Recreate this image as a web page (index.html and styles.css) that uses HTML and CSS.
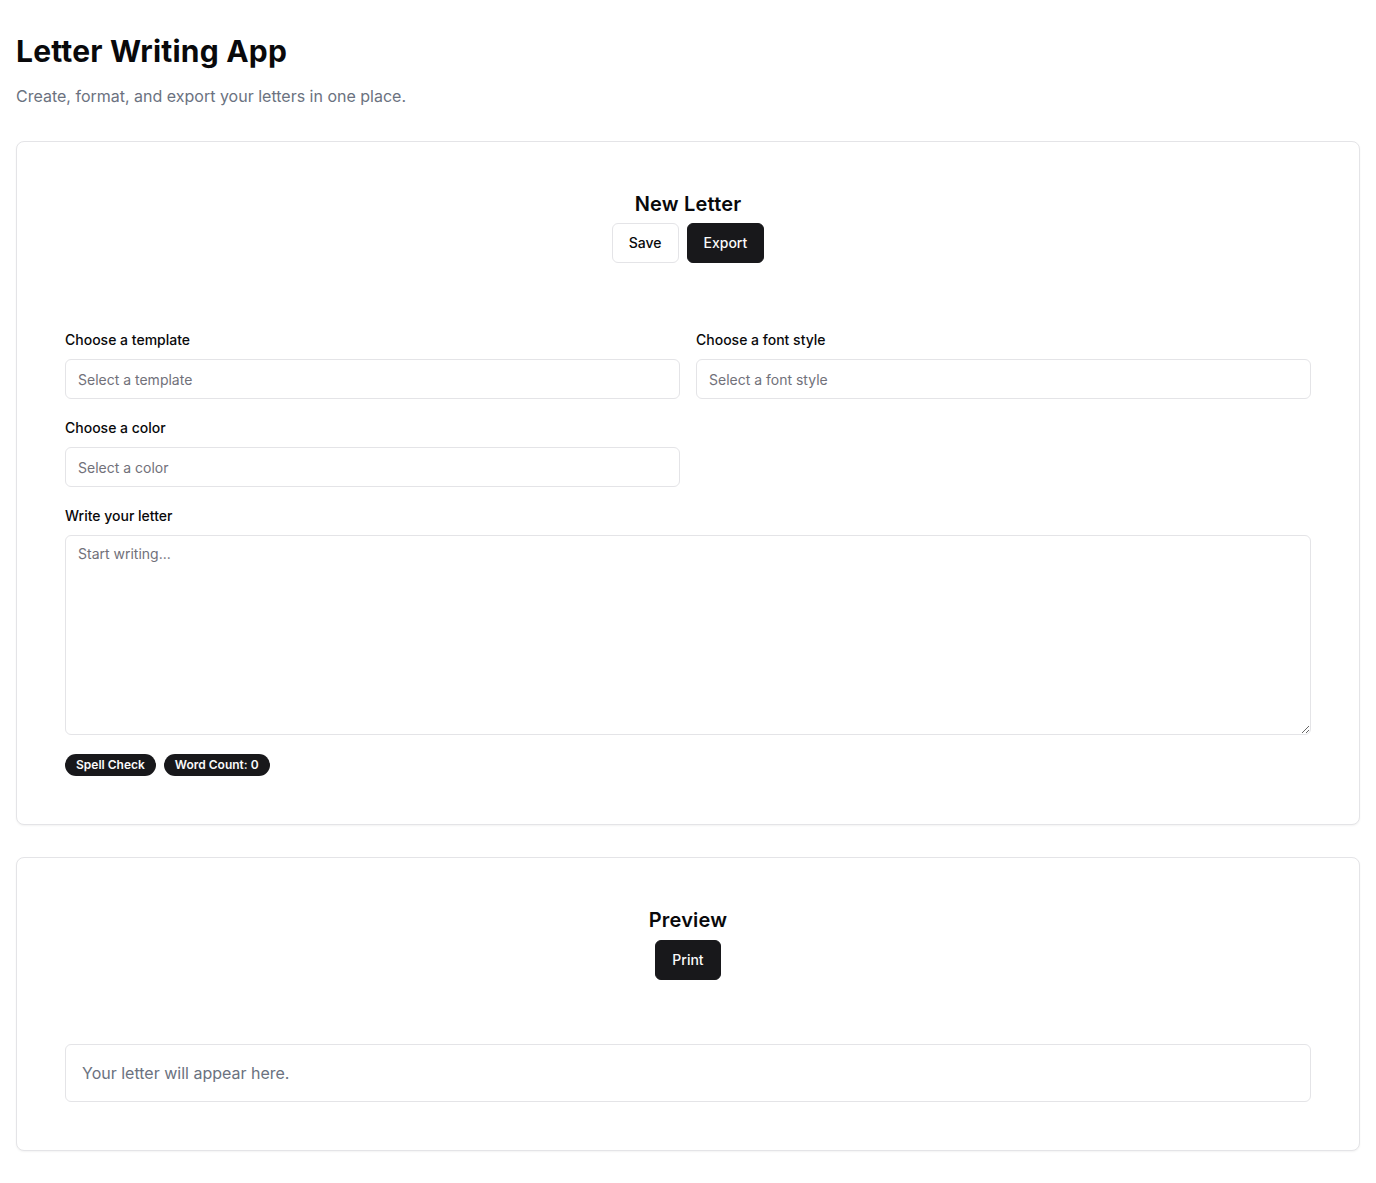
FILE: index.html
```html
<!DOCTYPE html>
<html lang="en">
<head>
<meta charset="utf-8">
<title>Letter Writing App</title>
<link rel="stylesheet" href="styles.css">
</head>
<body>
<main class="page">
  <h1 class="page-title">Letter Writing App</h1>
  <p class="page-subtitle">Create, format, and export your letters in one place.</p>

  <section class="card">
    <div class="card-header">
      <h2 class="card-title">New Letter</h2>
      <div class="actions">
        <button class="btn btn-outline" type="button">Save</button>
        <button class="btn btn-primary" type="button">Export</button>
      </div>
    </div>
    <div class="card-content">
      <div class="form-grid">
        <div class="field">
          <label class="label">Choose a template</label>
          <div class="select"><span class="placeholder">Select a template</span></div>
        </div>
        <div class="field">
          <label class="label">Choose a font style</label>
          <div class="select"><span class="placeholder">Select a font style</span></div>
        </div>
        <div class="field">
          <label class="label">Choose a color</label>
          <div class="select"><span class="placeholder">Select a color</span></div>
        </div>
      </div>
      <div class="field field-full">
        <label class="label">Write your letter</label>
        <textarea class="textarea" placeholder="Start writing..."></textarea>
      </div>
      <div class="badges">
        <span class="badge">Spell Check</span>
        <span class="badge">Word Count: 0</span>
      </div>
    </div>
  </section>

  <section class="card card-preview">
    <div class="card-header card-header-preview">
      <h2 class="card-title">Preview</h2>
      <div class="actions">
        <button class="btn btn-primary" type="button">Print</button>
      </div>
    </div>
    <div class="card-content">
      <div class="preview-box">Your letter will appear here.</div>
    </div>
  </section>
</main>
</body>
</html>
```

FILE: styles.css
```css
* {
  box-sizing: border-box;
}

html, body {
  margin: 0;
  padding: 0;
  background: #ffffff;
}

body {
  font-family: Inter, "Noto Sans", "Liberation Sans", sans-serif;
  color: #09090b;
  font-size: 16px;
  line-height: 24px;
}

.page {
  padding: 33px 16px 32px;
}

.page-title {
  margin: 0;
  font-size: 30px;
  line-height: 36px;
  font-weight: 700;
  letter-spacing: 0.2px;
}

.page-subtitle {
  margin: 15px 0 0;
  font-size: 16px;
  line-height: 24px;
  color: #6b7280;
}

.card {
  margin-top: 33px;
  border: 1px solid #e4e4e7;
  border-radius: 8px;
  background: #fff;
  box-shadow: 0 1px 2px rgba(0, 0, 0, 0.05);
}

.card-preview {
  margin-top: 32px;
}

.card-header {
  padding: 48px 48px 48px;
  display: flex;
  flex-direction: column;
  align-items: center;
  gap: 5px;
}

.card-header-preview {
  gap: 6px;
}

.card-title {
  margin: 0;
  font-size: 20px;
  line-height: 28px;
  font-weight: 600;
  letter-spacing: 0.2px;
}

.actions {
  display: flex;
  gap: 8px;
}

.btn {
  height: 40px;
  padding: 0 16px;
  border-radius: 6px;
  font-family: inherit;
  font-size: 14px;
  font-weight: 500;
  line-height: 20px;
  cursor: pointer;
}

.btn-outline {
  background: #fff;
  border: 1px solid #e4e4e7;
  color: #09090b;
}

.btn-primary {
  background: #18181b;
  border: 1px solid #18181b;
  color: #fafafa;
}

.card-content {
  padding: 16px 48px 48px;
}

.form-grid {
  display: grid;
  grid-template-columns: 1fr 1fr;
  gap: 16px;
}

.field {
  display: flex;
  flex-direction: column;
  gap: 8px;
}

.field-full {
  margin-top: 16px;
}

.label {
  font-size: 14px;
  font-weight: 500;
  line-height: 24px;
  padding-top: 1px;
  margin-bottom: -1px;
}

.select {
  height: 40px;
  border: 1px solid #e4e4e7;
  border-radius: 6px;
  padding: 1px 12px 0;
  display: flex;
  align-items: center;
  font-size: 14px;
  background: #fff;
}

.placeholder {
  color: #71717a;
}

.textarea {
  display: block;
  width: 100%;
  height: 200px;
  border: 1px solid #e4e4e7;
  border-radius: 6px;
  padding: 8px 12px;
  font-family: inherit;
  font-size: 14px;
  line-height: 20px;
  color: #09090b;
  background: #fff;
  resize: vertical;
}

.textarea::placeholder {
  color: #71717a;
}

.badges {
  margin-top: 19px;
  display: flex;
  gap: 8px;
}

.badge {
  display: inline-flex;
  align-items: center;
  height: 22px;
  padding: 0 11px;
  border-radius: 999px;
  background: #18181b;
  color: #fafafa;
  font-size: 12px;
  font-weight: 600;
  line-height: 16px;
}

.preview-box {
  border: 1px solid #e4e4e7;
  border-radius: 6px;
  padding: 16px;
  font-size: 16px;
  line-height: 24px;
  color: #6b7280;
}
```
